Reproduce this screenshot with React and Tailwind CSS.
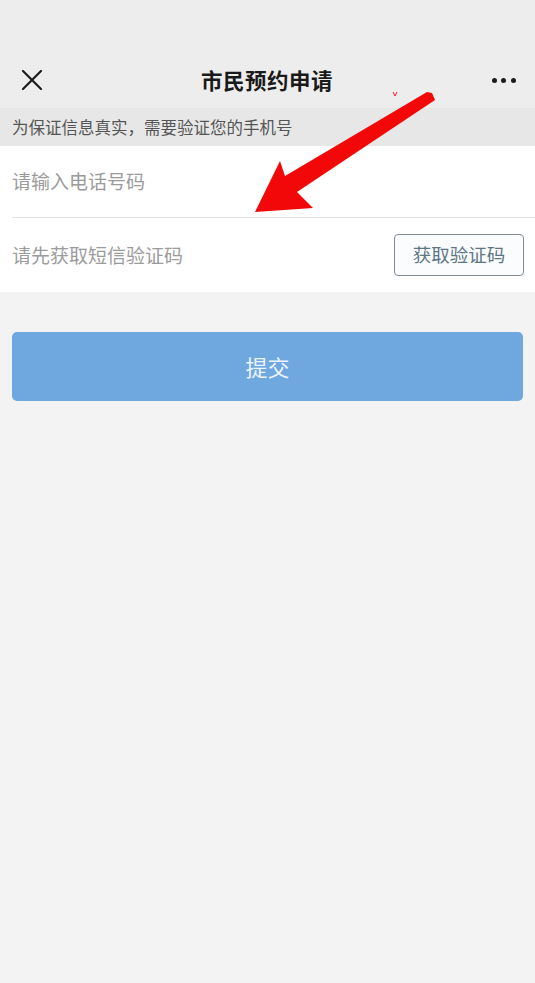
import React from "react";

const font = { fontFamily: '"Noto Sans CJK SC", "Noto Sans", sans-serif' };

const Arrow = () => (
    <svg className="absolute left-0 top-0 pointer-events-none" width="535" height="300" viewBox="0 0 535 300">
        <polygon
            points="255,212 280,161 285,176 427,92 432,93 435,100 297,192 313,208"
            fill="#f20808"
            strokeLinejoin="round"
        />
        <path d="M393 92 l2 4 l2 -4" stroke="#e23" strokeWidth="1" fill="none" />
    </svg>
);

const App = () => {
    return (
        <div className="relative min-h-[983px] w-full bg-[#f3f3f3]" style={font}>
            {/* top bar */}
            <div className="bg-[#ededed] pt-[52px]">
                <div className="flex h-[56px] items-center justify-between pl-[22px] pr-[19px]">
                    <svg className="w-[20px] h-[20px]" viewBox="0 0 20 20" fill="none">
                        <path d="M1 1 L19 19 M19 1 L1 19" stroke="#1c1c1c" strokeWidth="2.2" strokeLinecap="round"/>
                    </svg>
                    <h1 className="text-[21.5px] font-bold text-[#1a1a1a] tracking-[0.5px]">市民预约申请</h1>
                    <div className="flex gap-[4.5px] w-[24px] justify-end">
                        <span className="block w-[5px] h-[5px] rounded-full bg-[#1c1c1c]"></span>
                        <span className="block w-[5px] h-[5px] rounded-full bg-[#1c1c1c]"></span>
                        <span className="block w-[5px] h-[5px] rounded-full bg-[#1c1c1c]"></span>
                    </div>
                </div>
            </div>
            <div className="flex h-[38px] items-center bg-[#e7e7e7] px-[12px]">
                <p className="text-[16.5px] text-[#555]">为保证信息真实，需要验证您的手机号</p>
            </div>

            {/* form */}
            <div className="bg-white pl-[12px]">
                <div className="flex h-[72px] items-center border-b border-[#e2e2e2]">
                    <span className="text-[19px] text-[#9b9b9b]">请输入电话号码</span>
                </div>
                <div className="flex h-[74px] items-center justify-between pr-[11px]">
                    <span className="text-[19px] text-[#9b9b9b]">请先获取短信验证码</span>
                    <button className="h-[42px] w-[130px] rounded-[4px] border border-[#7f8c95] bg-[#fbfcfd] text-[18.5px] text-[#5d7686]">
                        获取验证码
                    </button>
                </div>
            </div>

            <div className="px-[12px] pt-[40px]">
                <button className="flex h-[69px] w-full items-center justify-center rounded-[5px] bg-[#6fa7df] text-[22px] text-[#eef4fb]">
                    提交
                </button>
            </div>

            <Arrow />
        </div>
    );
};

export default App;
